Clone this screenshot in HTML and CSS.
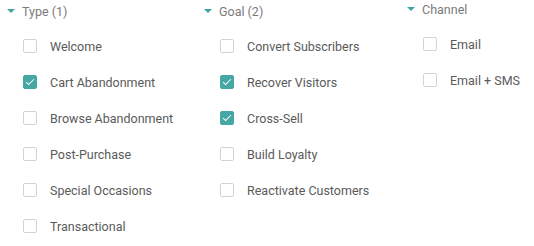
FILE: index.html
```html
<!DOCTYPE html>
<html lang="en">
<head>
    <meta charset="UTF-8">
    <title>Filters</title>
    <link rel="stylesheet" href="styles.css">
</head>
<body>
    <div class="filters">
        <div class="group">
            <div class="group-title"><span class="caret"></span>Type (1)</div>
            <ul class="options">
                <li><span class="box"></span>Welcome</li>
                <li><span class="box checked"></span>Cart Abandonment</li>
                <li><span class="box"></span>Browse Abandonment</li>
                <li><span class="box"></span>Post-Purchase</li>
                <li><span class="box"></span>Special Occasions</li>
                <li><span class="box"></span>Transactional</li>
            </ul>
        </div>
        <div class="group">
            <div class="group-title"><span class="caret"></span>Goal (2)</div>
            <ul class="options">
                <li><span class="box"></span>Convert Subscribers</li>
                <li><span class="box checked"></span>Recover Visitors</li>
                <li><span class="box checked"></span>Cross-Sell</li>
                <li><span class="box"></span>Build Loyalty</li>
                <li><span class="box"></span>Reactivate Customers</li>
            </ul>
        </div>
        <div class="group channel">
            <div class="group-title"><span class="caret"></span>Channel</div>
            <ul class="options">
                <li><span class="box"></span>Email</li>
                <li><span class="box"></span>Email + SMS</li>
            </ul>
        </div>
    </div>
</body>
</html>
```

FILE: styles.css
```css
body {
    margin: 0;
    font-family: Roboto, "Liberation Sans", sans-serif;
    background: #fff;
}
.filters {
    display: grid;
    grid-template-columns: 197px 203px 1fr;
}
.group {
    padding: 2px 0 0 7px;
}
.group.channel {
    padding-top: 0;
}
.group-title {
    display: flex;
    align-items: center;
    height: 18px;
    font-size: 12.5px;
    color: #7a7a7a;
}
.caret {
    width: 0;
    height: 0;
    border-left: 4px solid transparent;
    border-right: 4px solid transparent;
    border-top: 4.5px solid #3fa7a3;
    margin-right: 7px;
}
.options {
    list-style: none;
    margin: 8px 0 0 0;
    padding: 0 0 0 16px;
}
.options li {
    display: flex;
    align-items: center;
    height: 36px;
    font-size: 12.5px;
    color: #5a5a5a;
}
.box {
    box-sizing: border-box;
    width: 14px;
    height: 14px;
    border: 1px solid #d4d4d4;
    border-radius: 2px;
    margin-right: 13px;
    position: relative;
}
.box.checked {
    background: #45a8a4;
    border-color: #45a8a4;
}
.box.checked::after {
    content: "";
    position: absolute;
    left: 4px;
    top: 1px;
    width: 3px;
    height: 7px;
    border: solid #fff;
    border-width: 0 1.5px 1.5px 0;
    transform: rotate(45deg);
}
```
